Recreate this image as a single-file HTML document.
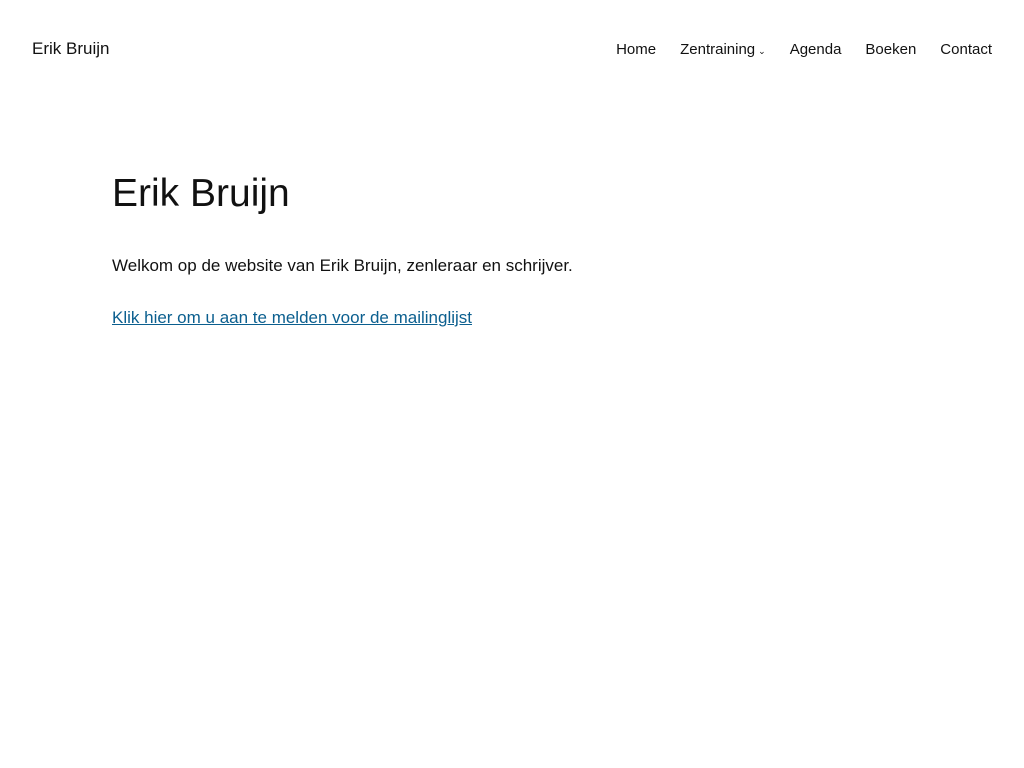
<!DOCTYPE html>
<html><head><meta charset="utf-8"><style>
body{margin:0;background:#fff;font-family:"Liberation Sans",sans-serif;color:#111;}
.site{position:absolute;left:32px;top:39px;font-size:17px;}
nav{position:absolute;right:32px;top:41px;font-size:15px;display:flex;gap:24px;}
nav span.ch{font-size:9px;margin-left:3px;}
h1{position:absolute;left:112px;top:172px;margin:0;font-weight:normal;font-size:39px;}
p{position:absolute;left:112px;margin:0;font-size:17px;}
a{color:#0b5f8f;text-decoration:underline;}
</style></head><body>
<div class="site">Erik Bruijn</div>
<nav><span>Home</span><span>Zentraining<span class="ch">&#8964;</span></span><span>Agenda</span><span>Boeken</span><span>Contact</span></nav>
<h1>Erik Bruijn</h1>
<p style="top:256px">Welkom op de website van Erik Bruijn, zenleraar en schrijver.</p>
<p style="top:308px"><a>Klik hier om u aan te melden voor de mailinglijst</a></p>
</body></html>
